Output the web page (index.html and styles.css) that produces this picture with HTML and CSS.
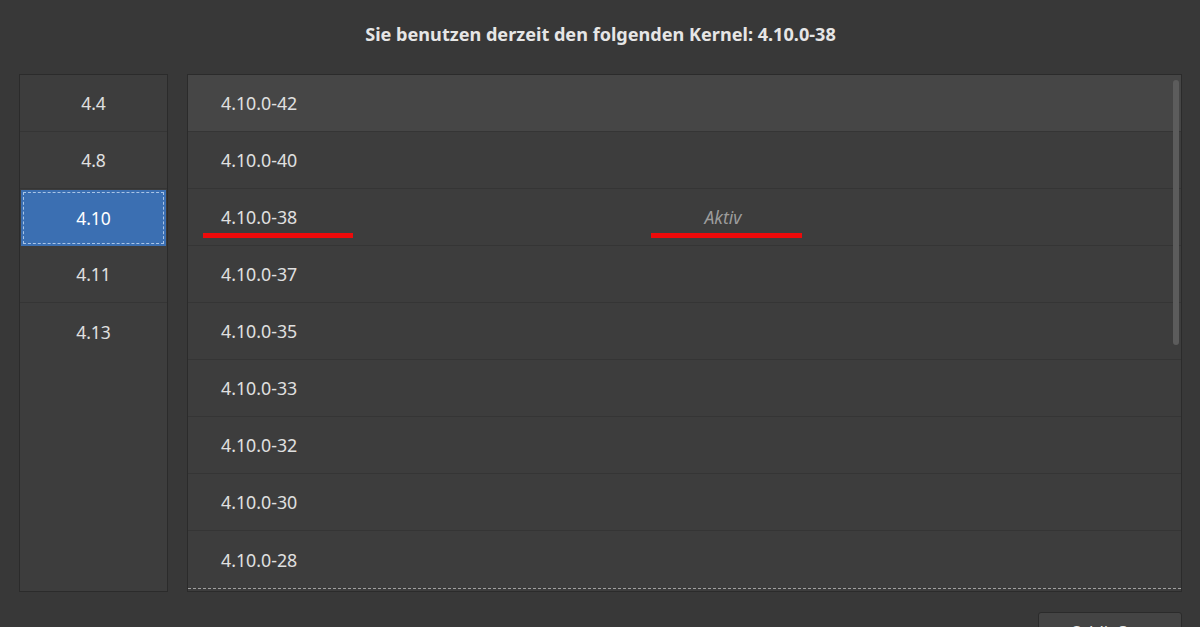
FILE: index.html
```html
<!DOCTYPE html>
<html lang="de">
<head>
<meta charset="utf-8">
<title>Kernel</title>
<link rel="stylesheet" href="styles.css">
</head>
<body>
<div class="window">
  <h1 class="title">Sie benutzen derzeit den folgenden Kernel: 4.10.0-38</h1>
  <div class="main">
    <ul class="series">
      <li class="srow">4.4</li>
      <li class="srow">4.8</li>
      <li class="srow selected"><span class="focus">4.10</span></li>
      <li class="srow">4.11</li>
      <li class="srow last">4.13</li>
    </ul>
    <div class="kernels">
      <ul class="klist">
        <li class="krow hover"><span class="kname">4.10.0-42</span><span class="kstatus"></span></li>
        <li class="krow"><span class="kname">4.10.0-40</span><span class="kstatus"></span></li>
        <li class="krow"><span class="kname">4.10.0-38</span><span class="kstatus">Aktiv</span><span class="mark mark-name"></span><span class="mark mark-status"></span></li>
        <li class="krow"><span class="kname">4.10.0-37</span><span class="kstatus"></span></li>
        <li class="krow"><span class="kname">4.10.0-35</span><span class="kstatus"></span></li>
        <li class="krow"><span class="kname">4.10.0-33</span><span class="kstatus"></span></li>
        <li class="krow"><span class="kname">4.10.0-32</span><span class="kstatus"></span></li>
        <li class="krow"><span class="kname">4.10.0-30</span><span class="kstatus"></span></li>
        <li class="krow last"><span class="kname">4.10.0-28</span><span class="kstatus"></span></li>
      </ul>
      <div class="scrollbar"></div>
    </div>
  </div>
  <div class="actions">
    <button class="btn">Schließen</button>
  </div>
</div>
</body>
</html>
```

FILE: styles.css
```css
* { box-sizing: border-box; }
html, body {
  margin: 0;
  padding: 0;
  background: #383838;
  width: 1200px;
  height: 627px;
  overflow: hidden;
}
body {
  font-family: "Noto Sans", "Open Sans", "DejaVu Sans", sans-serif;
  color: #e2e2e2;
}
.window {
  padding: 0 18px 0 19px;
}
.title {
  margin: 0;
  height: 74px;
  padding-top: 21px;
  text-align: center;
  font-size: 18.1px;
  font-weight: 700;
  line-height: 26px;
  color: #e6e6e6;
}
.main {
  display: flex;
  gap: 19px;
  height: 518px;
}
.series {
  list-style: none;
  margin: 0;
  padding: 0;
  width: 149px;
  background: #3d3d3d;
  border: 1px solid #2b2b2b;
  display: flex;
  flex-direction: column;
}
.srow {
  height: 57px;
  border-bottom: 1px solid #353535;
  display: flex;
  align-items: center;
  justify-content: center;
  font-size: 17.5px;
  color: #e0e0e0;
}
.srow.last { border-bottom: none; }
.srow.selected {
  background: #3b6fb2;
  margin: 1px 1px 0;
  height: 56px;
  padding: 2px;
  border-bottom: none;
  color: #fff;
}
.focus {
  flex: 1;
  align-self: stretch;
  display: flex;
  align-items: center;
  justify-content: center;
  border: 1px dashed #a9c4e6;
}
.kernels {
  position: relative;
  flex: 1;
  background: #3d3d3d;
  border: 1px solid #2b2b2b;
  padding-bottom: 1px;
}
.klist {
  list-style: none;
  margin: 0;
  padding: 0;
  border-bottom: 1px dashed #a0a0a0;
}
.krow {
  position: relative;
  height: 57px;
  border-bottom: 1px solid #353535;
  display: grid;
  grid-template-columns: 367px 270px;
  align-items: center;
  padding-left: 33px;
  font-size: 17.8px;
  color: #e0e0e0;
}
.krow.hover { background: #464646; }
.krow.last { border-bottom: none; }
.kstatus {
  text-align: center;
  font-style: italic;
  color: #9c9c9c;
  font-size: 17.5px;
}
.mark {
  position: absolute;
  top: 44px;
  height: 5px;
  background: #ee0a0a;
}
.mark-name { left: 15px; width: 150px; }
.mark-status { left: 463px; width: 151px; }
.scrollbar {
  position: absolute;
  right: 2px;
  top: 5px;
  width: 6px;
  height: 265px;
  border-radius: 3px;
  background: #5c5c5c;
}
.actions {
  display: flex;
  justify-content: flex-end;
  padding-top: 20px;
}
.btn {
  width: 144px;
  height: 36px;
  background: #444444;
  border: 1px solid #2b2b2b;
  border-radius: 3px;
  color: #e6e6e6;
  font-family: "Noto Sans", "Open Sans", sans-serif;
  font-size: 17px;
  padding-top: 4px;
}
```
